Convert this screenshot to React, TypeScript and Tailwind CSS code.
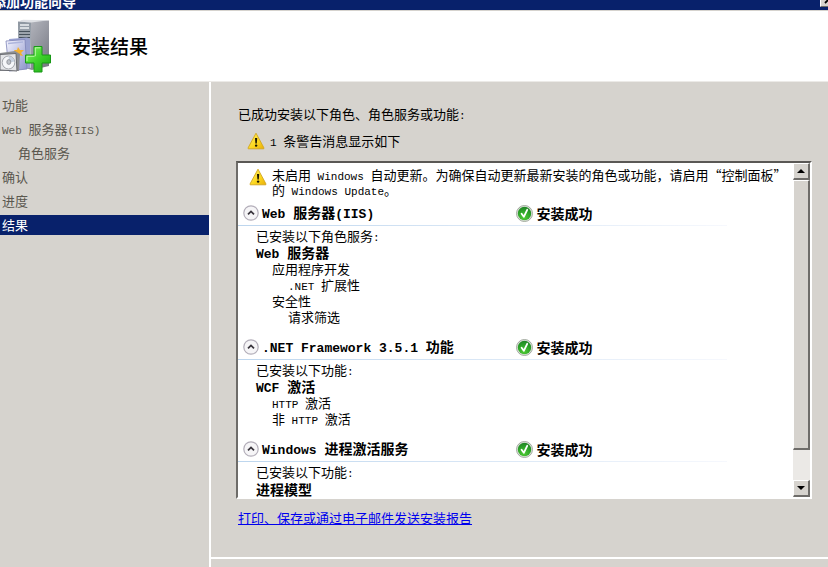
import React, { useState } from 'react';
import clsx from 'clsx';

interface RoleItem {
  label: string;
  level: 0 | 1 | 2;
  bold?: boolean;
}

interface RoleSection {
  title: string;
  status: string;
  intro: string;
  items: RoleItem[];
}

const STEPS = [
  { label: '功能' },
  { label: 'Web 服务器(IIS)' },
  { label: '角色服务', nested: true },
  { label: '确认' },
  { label: '进度' },
  { label: '结果', active: true },
];

const SECTIONS: RoleSection[] = [
  {
    title: 'Web 服务器(IIS)',
    status: '安装成功',
    intro: '已安装以下角色服务:',
    items: [
      { label: 'Web 服务器', level: 0, bold: true },
      { label: '应用程序开发', level: 1 },
      { label: '.NET 扩展性', level: 2 },
      { label: '安全性', level: 1 },
      { label: '请求筛选', level: 2 },
    ],
  },
  {
    title: '.NET Framework 3.5.1 功能',
    status: '安装成功',
    intro: '已安装以下功能:',
    items: [
      { label: 'WCF 激活', level: 0, bold: true },
      { label: 'HTTP 激活', level: 1 },
      { label: '非 HTTP 激活', level: 1 },
    ],
  },
  {
    title: 'Windows 进程激活服务',
    status: '安装成功',
    intro: '已安装以下功能:',
    items: [{ label: '进程模型', level: 0, bold: true }],
  },
];

// Latin runs are set in a half-width mono face, the rest in the CJK face
function Mixed({ text, bold = false }: { text: string; bold?: boolean }) {
  const parts = text.split(/([\x20-\x7e]+)/).filter(Boolean);
  return (
    <span className={clsx('leading-[14px] whitespace-pre', bold ? 'text-[14px] font-bold' : 'text-[13px]')}>
      {parts.map((part, i) =>
        /^[\x20-\x7e]/.test(part) ? (
          <span key={i} className={clsx("font-['Liberation_Mono',monospace] leading-none", bold ? 'text-[13px]' : 'text-[11px]')}>
            {part}
          </span>
        ) : (
          part
        )
      )}
    </span>
  );
}

function WarningIcon() {
  return (
    <svg width="18" height="18" viewBox="0 0 18 18" className="shrink-0" aria-hidden="true">
      <defs>
        <linearGradient id="warn" x1="0" y1="0" x2="1" y2="1">
          <stop offset="0" stopColor="#fff36a" />
          <stop offset="0.6" stopColor="#fbd51c" />
          <stop offset="1" stopColor="#e9ae0a" />
        </linearGradient>
      </defs>
      <path d="M9 1.2 L17 16 Q17.2 16.8 16.4 16.8 L1.6 16.8 Q0.8 16.8 1 16 Z" fill="url(#warn)" stroke="#d3a51e" strokeWidth="0.9" strokeLinejoin="round" />
      <path d="M8 6 h2.2 l-0.4 5.4 h-1.4 z" fill="#1c1600" />
      <circle cx="9.1" cy="13.6" r="1.2" fill="#1c1600" />
    </svg>
  );
}

function SuccessIcon() {
  return (
    <svg width="17" height="17" viewBox="0 0 17 17" className="shrink-0" aria-hidden="true">
      <defs>
        <radialGradient id="ok" cx="0.45" cy="0.8" r="0.8">
          <stop offset="0" stopColor="#4fcb34" />
          <stop offset="0.6" stopColor="#2da329" />
          <stop offset="1" stopColor="#1f8425" />
        </radialGradient>
      </defs>
      <circle cx="8.5" cy="8.5" r="8" fill="#dfe4dc" stroke="#9aa397" strokeWidth="0.9" />
      <circle cx="8.5" cy="8.5" r="6.7" fill="url(#ok)" />
      <path d="M5.6 8.8 L7.8 11.8 L11.2 4.8" fill="none" stroke="#fff" strokeWidth="1.8" strokeLinecap="round" strokeLinejoin="round" />
    </svg>
  );
}

function CollapseIcon({ open }: { open: boolean }) {
  return (
    <svg width="16" height="16" viewBox="0 0 16 16" aria-hidden="true">
      <circle cx="8" cy="8" r="7.2" fill="#f6f5f7" stroke="#b3aeb9" strokeWidth="1.2" />
      <path d={open ? 'M5 9.4 L8 6.4 L11 9.4' : 'M5 6.6 L8 9.6 L11 6.6'} fill="none" stroke="#38343c" strokeWidth="1.7" />
    </svg>
  );
}

function ServerIcon() {
  return (
    <svg width="52" height="56" viewBox="0 0 52 56" className="shrink-0" aria-hidden="true">
      <defs>
        <linearGradient id="side" x1="0" y1="0" x2="1" y2="1">
          <stop offset="0" stopColor="#c3c5cc" />
          <stop offset="0.5" stopColor="#9b9da6" />
          <stop offset="1" stopColor="#73757f" />
        </linearGradient>
        <linearGradient id="front" x1="0" y1="0" x2="0" y2="1">
          <stop offset="0" stopColor="#8d96a0" />
          <stop offset="1" stopColor="#c6cad2" />
        </linearGradient>
        <linearGradient id="pane" x1="0" y1="0" x2="1" y2="1">
          <stop offset="0" stopColor="#f6f6ff" />
          <stop offset="1" stopColor="#8b92ca" />
        </linearGradient>
        <linearGradient id="plus" x1="0" y1="0" x2="1" y2="1">
          <stop offset="0" stopColor="#8af56a" />
          <stop offset="0.5" stopColor="#3ed32a" />
          <stop offset="1" stopColor="#1da51a" />
        </linearGradient>
      </defs>
      {/* tower */}
      <path d="M18 4 L23 2 L49 2.5 L49 48 L32 52 L18 48 Z" fill="url(#side)" />
      <path d="M18 3.5 L31 4.5 L31 50 L18 46 Z" fill="url(#front)" />
      <path d="M18 3.5 L23 1.8 L49 2.3 L31 4.6 Z" fill="#dfe1e5" />
      <path d="M20 7 H29 M20 10 H29" stroke="#eef1f3" strokeWidth="1.3" />
      <path d="M19 13.5 H30 M19 16.5 H30 M19 19.5 H30" stroke="#46515c" strokeWidth="1.2" />
      {/* papers */}
      <path d="M9 21 L27 19.5 L30 21 L30 50 L14 53 Z" fill="#9aa2d0" />
      <path d="M6 23 L25 21.5 L27 51 L9 53 Z" fill="url(#pane)" stroke="#7d84b8" strokeWidth="0.8" />
      <path d="M8 25.5 L23 24" stroke="#aeb5dc" strokeWidth="1.6" />
      <path d="M18 29 L20 32 L24 32 L21 35 L23 38 L18.5 37 L15 39 L16 35 L14 32 L17 32 Z" fill="#f5b12e" />
      {/* disc box */}
      <path d="M0 35 L15 33 L20 36 L19 53 L0 53 Z" fill="#8d8f93" />
      <path d="M0 36.5 L16 35.5 L17 53 L0 52 Z" fill="#e4e5e8" stroke="#686a70" strokeWidth="1" />
      <ellipse cx="8.5" cy="44.5" rx="6.3" ry="6.5" fill="#f5f6f9" stroke="#a3a6ac" />
      <path d="M8.5 38.5 A6 6 0 0 1 14.5 43.5 L9.5 44.5 Z" fill="#c7d1df" />
      <ellipse cx="8.8" cy="44" rx="2" ry="2.4" fill="#bfc3ca" stroke="#898c93" strokeWidth="0.8" />
      {/* plus */}
      <path d="M34 28.5 H42 V37 H50.5 V45 H42 V54 H34 V45 H25.5 V37 H34 Z" fill="url(#plus)" stroke="#189817" strokeWidth="1" strokeLinejoin="round" />
      <path d="M35.3 38.2 V29.8 H40.5 M27 43 V38.3 H34.5" fill="none" stroke="#c4fbb0" strokeWidth="0.9" />
    </svg>
  );
}

function ScrollButton({ direction }: { direction: 'up' | 'down' }) {
  return (
    <button
      type="button"
      aria-label={direction === 'up' ? '向上滚动' : '向下滚动'}
      className="flex h-[17px] w-full shrink-0 items-center justify-center border-t border-l border-r-2 border-b-2 border-t-white border-l-white border-r-[#6e6c69] border-b-[#6e6c69] bg-[#d6d3ce]"
    >
      <svg width="8" height="4" viewBox="0 0 8 4" aria-hidden="true">
        <path d={direction === 'up' ? 'M0 4 L4 0 L8 4 Z' : 'M0 0 L4 4 L8 0 Z'} fill="#000" />
      </svg>
    </button>
  );
}

function ResultSection({ section }: { section: RoleSection }) {
  const [open, setOpen] = useState(true);

  return (
    <section className="mb-[10px]">
      <div className="grid h-6 grid-cols-2 items-center">
        <h2 className="flex items-center gap-[3px] pl-[5px]">
          <button type="button" aria-label={section.title} aria-expanded={open} onClick={() => setOpen(!open)} className="shrink-0">
            <CollapseIcon open={open} />
          </button>
          <Mixed text={section.title} bold />
        </h2>
        <div className="flex items-center gap-1">
          <SuccessIcon />
          <Mixed text={section.status} bold />
        </div>
      </div>
      <div className="mr-[66px] h-px bg-linear-to-r from-[#bdd6ee] to-[#f6f8fd]" />
      {open && (
        <div className="pt-[2px] pl-[18px]">
          <p className="flex h-4 items-center">
            <Mixed text={section.intro} />
          </p>
          <ul>
            {section.items.map((item) => (
              <li
                key={item.label}
                className={clsx('flex items-center', item.bold ? 'h-[17px]' : 'h-4', item.level === 1 && 'pl-4', item.level === 2 && 'pl-8')}
              >
                <Mixed text={item.label} bold={item.bold} />
              </li>
            ))}
          </ul>
        </div>
      )}
    </section>
  );
}

export default function App() {
  return (
    <div className="flex h-screen flex-col overflow-hidden bg-[#d6d3ce] font-['Noto_Sans_CJK_SC',sans-serif] text-black">
      <div className="flex h-[10px] shrink-0 items-end justify-between overflow-hidden bg-[#08216b]">
        <span className="-ml-2 text-[14px] leading-[18px] font-bold whitespace-nowrap text-white">添加功能向导</span>
        <button type="button" aria-label="关闭" className="mb-[3px] flex h-[14px] w-2 items-center overflow-hidden border-b border-l border-b-[#6e6c69] border-l-white bg-[#d6d3ce]">
          <svg width="14" height="14" viewBox="0 0 14 14" className="shrink-0" aria-hidden="true">
            <path d="M4 3 L11 10 M11 3 L4 10" stroke="#000" strokeWidth="1.8" />
          </svg>
        </button>
      </div>

      <header className="flex h-[71px] shrink-0 items-center gap-5 border-t border-[#d6d3ce] bg-white">
        <ServerIcon />
        <h1 className="text-[19px] leading-6 font-medium">安装结果</h1>
      </header>

      <div className="flex min-h-0 flex-1 border-t border-[#eceae7]">
        <nav className="w-[211px] shrink-0 border-r-2 border-white pt-[13px]">
          <ul className="flex flex-col gap-1">
            {STEPS.map((step) => (
              <li key={step.label}>
                <a
                  href="#"
                  aria-current={step.active ? 'step' : undefined}
                  className={clsx('flex h-5 items-center', step.nested ? 'pl-[18px]' : 'pl-[2px]', step.active ? 'bg-[#08216b] text-white' : 'text-[#5a574e]')}
                >
                  <Mixed text={step.label} />
                </a>
              </li>
            ))}
          </ul>
        </nav>

        <main className="flex min-w-0 flex-1 flex-col pt-6">
          <div className="flex min-h-0 flex-1 flex-col pr-4 pl-[25px]">
            <p className="flex h-4 shrink-0 items-center pl-[2px]">
              <Mixed text="已成功安装以下角色、角色服务或功能:" />
            </p>
            <p className="mt-[10px] flex h-[18px] shrink-0 items-center gap-[5px] pl-[11px]">
              <WarningIcon />
              <Mixed text="1 条警告消息显示如下" />
            </p>

            <div className="mt-[11px] flex min-h-0 flex-1 border-2 border-t-[#5a5855] border-r-white border-b-white border-l-[#6e6c69] bg-white">
              <div className="min-w-0 flex-1 overflow-hidden">
                <div className="mb-[3px] flex items-start gap-[5px] pt-[5px] pl-[11px]">
                  <WarningIcon />
                  <p className="flex flex-col">
                    <Mixed text="未启用 Windows 自动更新。为确保自动更新最新安装的角色或功能，请启用“控制面板”" />
                    <Mixed text="的 Windows Update。" />
                  </p>
                </div>
                {SECTIONS.map((section) => (
                  <ResultSection key={section.title} section={section} />
                ))}
              </div>

              <div className="flex w-[17px] shrink-0 flex-col bg-[#ebe9e6]">
                <ScrollButton direction="up" />
                <div className="flex-1">
                  <div className="h-[90%] border-t border-l border-r-2 border-b-2 border-t-white border-l-white border-r-[#6e6c69] border-b-[#6e6c69] bg-[#d6d3ce]" />
                </div>
                <ScrollButton direction="down" />
              </div>
            </div>

            <div className="mt-[9px] mb-[29px] flex h-5 shrink-0 items-center pl-[2px]">
              <a href="#" className="text-[13px] text-[#0000ee] underline">
                打印、保存或通过电子邮件发送安装报告
              </a>
            </div>
          </div>
          <div className="h-[10px] shrink-0 border-t-2 border-white" />
        </main>
      </div>
    </div>
  );
}
